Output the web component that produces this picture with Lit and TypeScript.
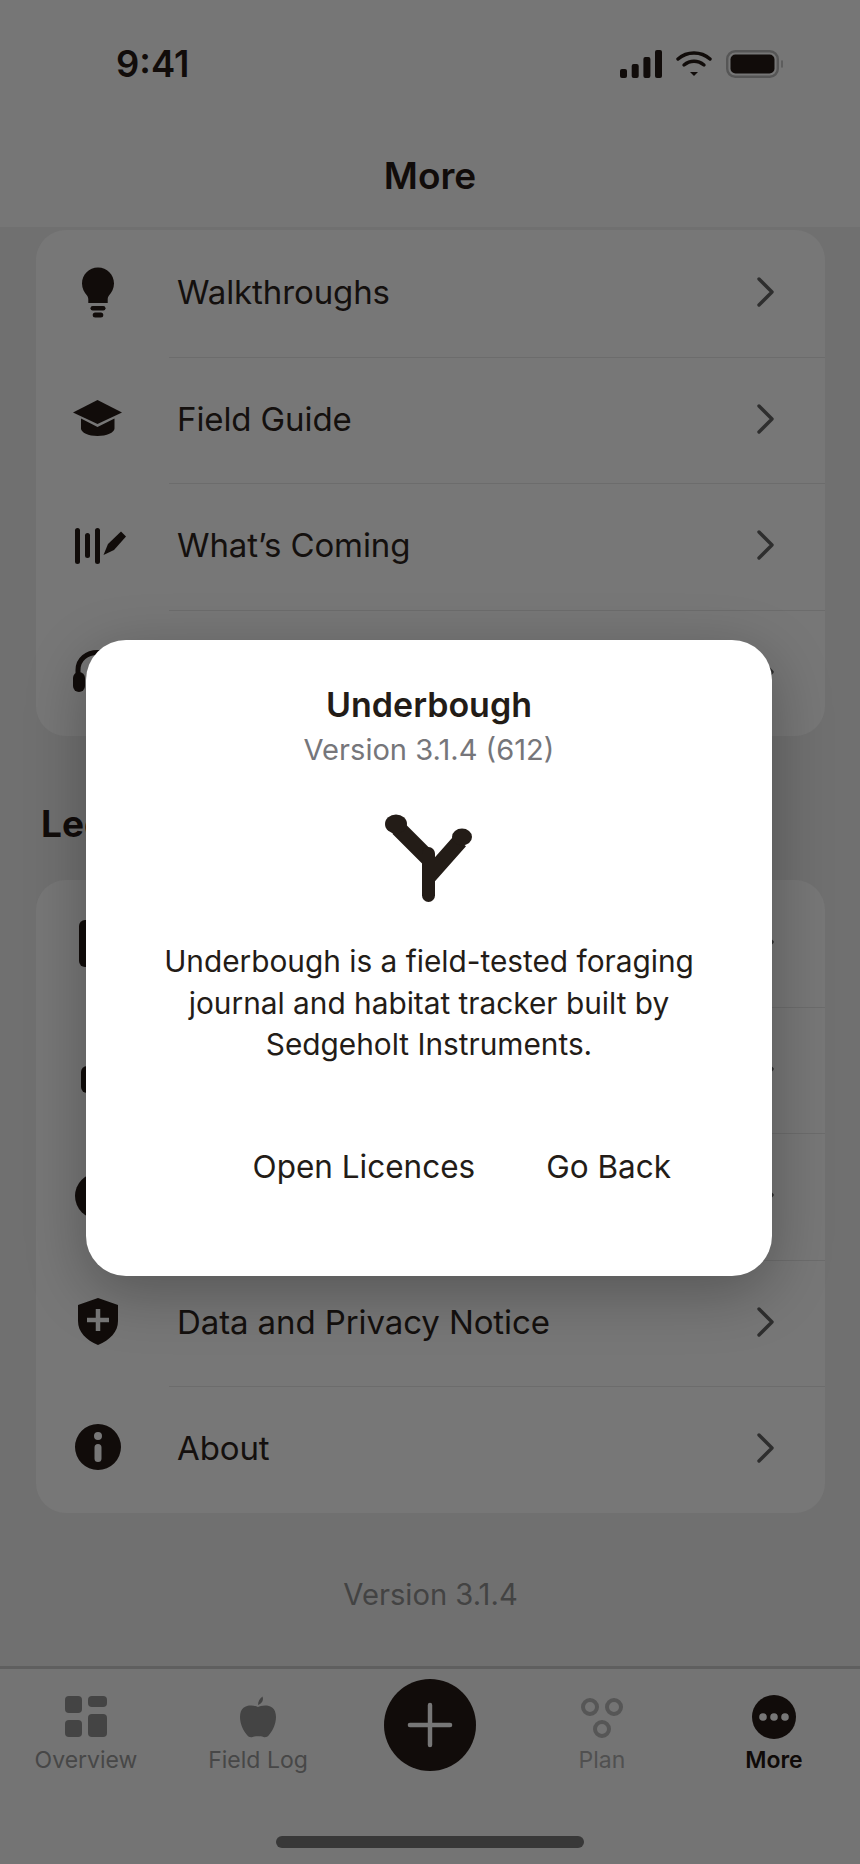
import { LitElement, html, css, svg } from "lit";
import { customElement } from "lit/decorators.js";

const chevron = html`<svg class="chev" viewBox="0 0 20 32" width="20" height="32"><path d="M3 3 L16 16 L3 29" fill="none" stroke="#2e2e2e" stroke-width="3.4" stroke-linecap="round" stroke-linejoin="round"/></svg>`;

const icons: Record<string, unknown> = {
  bulb: svg`<path d="M25 2.500c-9 0-16 7-16 16 0 5 2.300 9 5 12 1 1.200 1.300 2.500 1.300 4v3.500h19.400V34.500c0-1.500.3-2.800 1.300-4 2.700-3 5-7 5-12 0-9-7-16-16-16z"/><rect x="17.500" y="41" width="15" height="4.500" rx="2.200"/><rect x="19.700" y="47.500" width="10.600" height="5" rx="2.500"/>`,
  cap: svg`<path d="M24.500 8 49 20.500 24.500 32 0 20.500z"/><path d="M8 26.500 24.500 35 41.500 26.500v10c0 4-8 7.500-17 7.500S8 40.500 8 36.500z"/>`,
  roadmap: svg`<rect x="2" y="10" width="5" height="36" rx="2.500"/><rect x="12" y="15" width="5" height="25" rx="2.500"/><rect x="22" y="10" width="5" height="36" rx="2.500"/><path d="M30.500 37 35 26 48 13.500 53 18.500 41 32z"/>`,
  headset: svg`<path d="M5 30v-5C5 14 14 7.500 24.500 7.500S44 14 44 25v5" fill="none" stroke="#110c0a" stroke-width="5"/><rect x="0" y="27" width="12" height="20" rx="6"/><rect x="37" y="27" width="12" height="20" rx="6"/>`,
  doc: svg`<rect x="6" y="5" width="38" height="47" rx="6"/>`,
  block: svg`<rect x="8" y="24" width="34" height="27" rx="6"/>`,
  circle: svg`<circle cx="25" cy="28" r="23"/>`,
  shield: svg`<path fill-rule="evenodd" d="M25 3 45 10v16c0 11-8 19-20 24C13 45 5 37 5 26V10zM22.750 14v8.750H14v4.500h8.750V36h4.500v-8.750H36v-4.500h-8.750V14z"/>`,
  info: svg`<path fill-rule="evenodd" d="M25 3a23 23 0 1 0 0 46 23 23 0 0 0 0-46zM25 11a4 4 0 1 1 0 8 4 4 0 0 1 0-8zM25 23a3.500 3.500 0 0 1 3.500 3.500v11a3.500 3.500 0 0 1-7 0v-11A3.500 3.500 0 0 1 25 23z"/>`,
};

const rowsA: [string, string][] = [
  ["bulb", "Walkthroughs"],
  ["cap", "Field Guide"],
  ["roadmap", "What’s Coming"],
  ["headset", ""],
];
const rowsB: [string, string][] = [
  ["doc", ""],
  ["block", ""],
  ["circle", ""],
  ["shield", "Data and Privacy Notice"],
  ["info", "About"],
];

@customElement("app-root")
export class AppRoot extends LitElement {
  static styles = css`
    :host { display: block; width: 860px; height: 1864px; font-family: Inter, "Liberation Sans", sans-serif; color: #110c0a; }
    * { box-sizing: border-box; }
    .screen { position: relative; width: 860px; height: 1864px; background: #707070; overflow: hidden; display: flex; flex-direction: column; }
    .top { height: 227px; background: #767676; display: flex; flex-direction: column; flex: none; position: relative; z-index: 1; }
    .status { height: 126px; padding: 2px 76px 0 116px; display: flex; align-items: center; justify-content: space-between; }
    .time { font-size: 36.400px; font-weight: 600; }
    .status-icons { display: flex; align-items: center; gap: 14px; }
    .status-icons svg { display: block; }
    .title { text-align: center; font-size: 37px; font-weight: 600; line-height: 44px; margin-top: 28px; }
    .content { flex: 1; padding: 0 35px 0 36px; display: flex; flex-direction: column; }
    .card { background: #777; border-radius: 30px; overflow: hidden; }
    .card.first { margin-top: 3px; }
    .row { height: 126.500px; padding-bottom: 2px; display: flex; align-items: center; position: relative; }
    .row + .row::before { content: ""; position: absolute; top: 0; left: 133px; right: 0; height: 1px; background: #6c6c6c; }
    .ico { width: 50px; height: 54px; margin-left: 37px; flex: none; fill: #110c0a; overflow: visible; }
    .label { margin-left: 54px; font-size: 33px; flex: 1; font-weight: 400; color: #14100e; letter-spacing: -0.1px; }
    .chev { margin-right: 49px; flex: none; }
    .section { font-size: 37px; font-weight: 700; line-height: 44px; margin: 66px 0 34px 5px; }
    .ver { text-align: center; font-size: 29.200px; color: #434343; margin-top: 65px; line-height: 34px; }
    .tabs { height: 198px; flex: none; border-top: 3px solid #5f5f5f; background: #747474; display: grid; grid-template-columns: repeat(5, 172px); position: relative; }
    .tab { display: flex; flex-direction: column; align-items: center; padding-top: 22px; font-size: 23px; color: #474747; }
    .tab > svg { height: 52px; width: 52px; display: block; }
    .tab span { margin-top: 3px; line-height: 28px; }
    .tab.plan { color: #505050; }
    .tab.on { color: #0f0a08; font-weight: 600; }
    .fab { width: 92px; height: 92px; border-radius: 50%; background: #110c0a; margin-top: -12px; display: flex; align-items: center; justify-content: center; }
    .home { position: absolute; left: 276px; bottom: 16px; width: 308px; height: 12px; border-radius: 6px; background: #383838; }
    .modal { position: absolute; left: 86px; top: 640px; width: 686px; height: 636px; background: #fff; border-radius: 40px; box-shadow: 0 16px 60px rgba(0,0,0,.28); z-index: 2; display: flex; flex-direction: column; align-items: center; color: #231c17; }
    .m-title { font-size: 34px; font-weight: 600; line-height: 42px; margin-top: 44px; }
    .m-ver { font-size: 29.100px; line-height: 34px; color: #76767a; margin-top: 7px; }
    .logo { margin-top: 47px; display: block; flex: none; }
    .m-body { font-size: 29.800px; line-height: 41.700px; text-align: center; margin-top: 37px; width: 600px; }
    .m-actions { display: flex; gap: 71px; font-size: 31.500px; align-self: flex-end; margin: 81px 101px 0 0; }
  `;

  private renderRow(r: [string, string]) {
    return html`<div class="row">
      <svg class="ico" viewBox="0 0 50 54">${icons[r[0]]}</svg>
      <div class="label">${r[1]}</div>
      ${chevron}
    </div>`;
  }

  render() {
    return html`<div class="screen">
      <div class="top">
        <div class="status">
          <div class="time">9:41</div>
          <div class="status-icons">
            <svg width="42" height="28" viewBox="0 0 42 28" fill="#110c0a"><rect x="0" y="19" width="7" height="9" rx="2"/><rect x="11.700" y="14" width="7" height="14" rx="2"/><rect x="23.400" y="7" width="7" height="21" rx="2"/><rect x="35" y="0" width="7" height="28" rx="2"/></svg>
            <svg width="36" height="28" viewBox="0 0 36 28" fill="none" stroke="#110c0a" stroke-width="3.400" stroke-linecap="round"><path d="M2 9C11 1 25 1 34 9"/><path d="M8 15C14 10 22 10 28 15"/><path d="M14 22h8l-4 4z" fill="#110c0a" stroke="none"/></svg>
            <svg width="58" height="28" viewBox="0 0 58 28"><rect x="1.200" y="1.200" width="50.600" height="25.600" rx="8" fill="none" stroke="#565656" stroke-width="2.400"/><rect x="4.500" y="4.500" width="44" height="19" rx="5" fill="#110c0a"/><path d="M56 11v6" stroke="#565656" stroke-width="1.500" stroke-linecap="round"/></svg>
          </div>
        </div>
        <div class="title">More</div>
      </div>
      <div class="content">
        <div class="card first">${rowsA.map((r) => this.renderRow(r))}</div>
        <div class="section">Legal</div>
        <div class="card">${rowsB.map((r) => this.renderRow(r))}</div>
        <div class="ver">Version 3.1.4</div>
      </div>
      <div class="tabs">
        <div class="tab"><svg viewBox="0 0 52 52" fill="#444"><rect x="5" y="5" width="17" height="17" rx="4"/><rect x="28" y="5" width="19" height="11" rx="4"/><rect x="5" y="29" width="17" height="17" rx="4"/><rect x="28" y="23" width="19" height="23" rx="4"/></svg><span>Overview</span></div>
        <div class="tab"><svg viewBox="0 0 52 52" fill="#444"><path d="M26 16c-3.500-2-18-4.500-18 10 0 7 3.500 14 7 18 1.500 2 3.500 2.500 5.500 2 2-.6 3.500-.7 5.500-.7s3.500.1 5.500.7c2 .5 4 0 5.500-2 3.500-4 7-11 7-18 0-14.500-14.500-12-18-10z"/><path d="M26 14c0-3.500 1.500-6.500 4.500-8.500 1.200 3 .2 6.500-4.500 8.500z"/></svg><span>Field Log</span></div>
        <div class="tab"><div class="fab"><svg viewBox="0 0 52 52" width="58" height="58" fill="none" stroke="#777" stroke-width="4" stroke-linecap="round"><path d="M26 8v36M8 26h36"/></svg></div></div>
        <div class="tab plan"><svg viewBox="0 0 52 52" fill="none" stroke="#565656" stroke-width="4"><circle cx="14" cy="16" r="7"/><circle cx="38" cy="16" r="7"/><circle cx="26" cy="38" r="7"/></svg><span>Plan</span></div>
        <div class="tab on"><svg viewBox="0 0 52 52"><circle cx="26" cy="26" r="22" fill="#110c0a"/><circle cx="15" cy="26" r="3.800" fill="#777"/><circle cx="26" cy="26" r="3.800" fill="#777"/><circle cx="37" cy="26" r="3.800" fill="#777"/></svg><span>More</span></div>
        <div class="home"></div>
      </div>
      <div class="modal">
        <div class="m-title">Underbough</div>
        <div class="m-ver">Version 3.1.4 (612)</div>
        <svg class="logo" width="90" height="90" viewBox="0 0 90 90"><path d="M14 14 L45 45 M76 27 L45 62" fill="none" stroke="#231c17" stroke-width="16"/><path d="M44.500 39.500 V81.500" fill="none" stroke="#231c17" stroke-width="13" stroke-linecap="round"/><ellipse cx="12" cy="10" rx="11" ry="9.500" fill="#231c17"/><ellipse cx="78" cy="23" rx="10" ry="8.500" fill="#231c17"/></svg>
        <div class="m-body">Underbough is a field-tested foraging<br>journal and habitat tracker built by<br>Sedgeholt Instruments.</div>
        <div class="m-actions"><span>Open Licences</span><span>Go Back</span></div>
      </div>
    </div>`;
  }
}
